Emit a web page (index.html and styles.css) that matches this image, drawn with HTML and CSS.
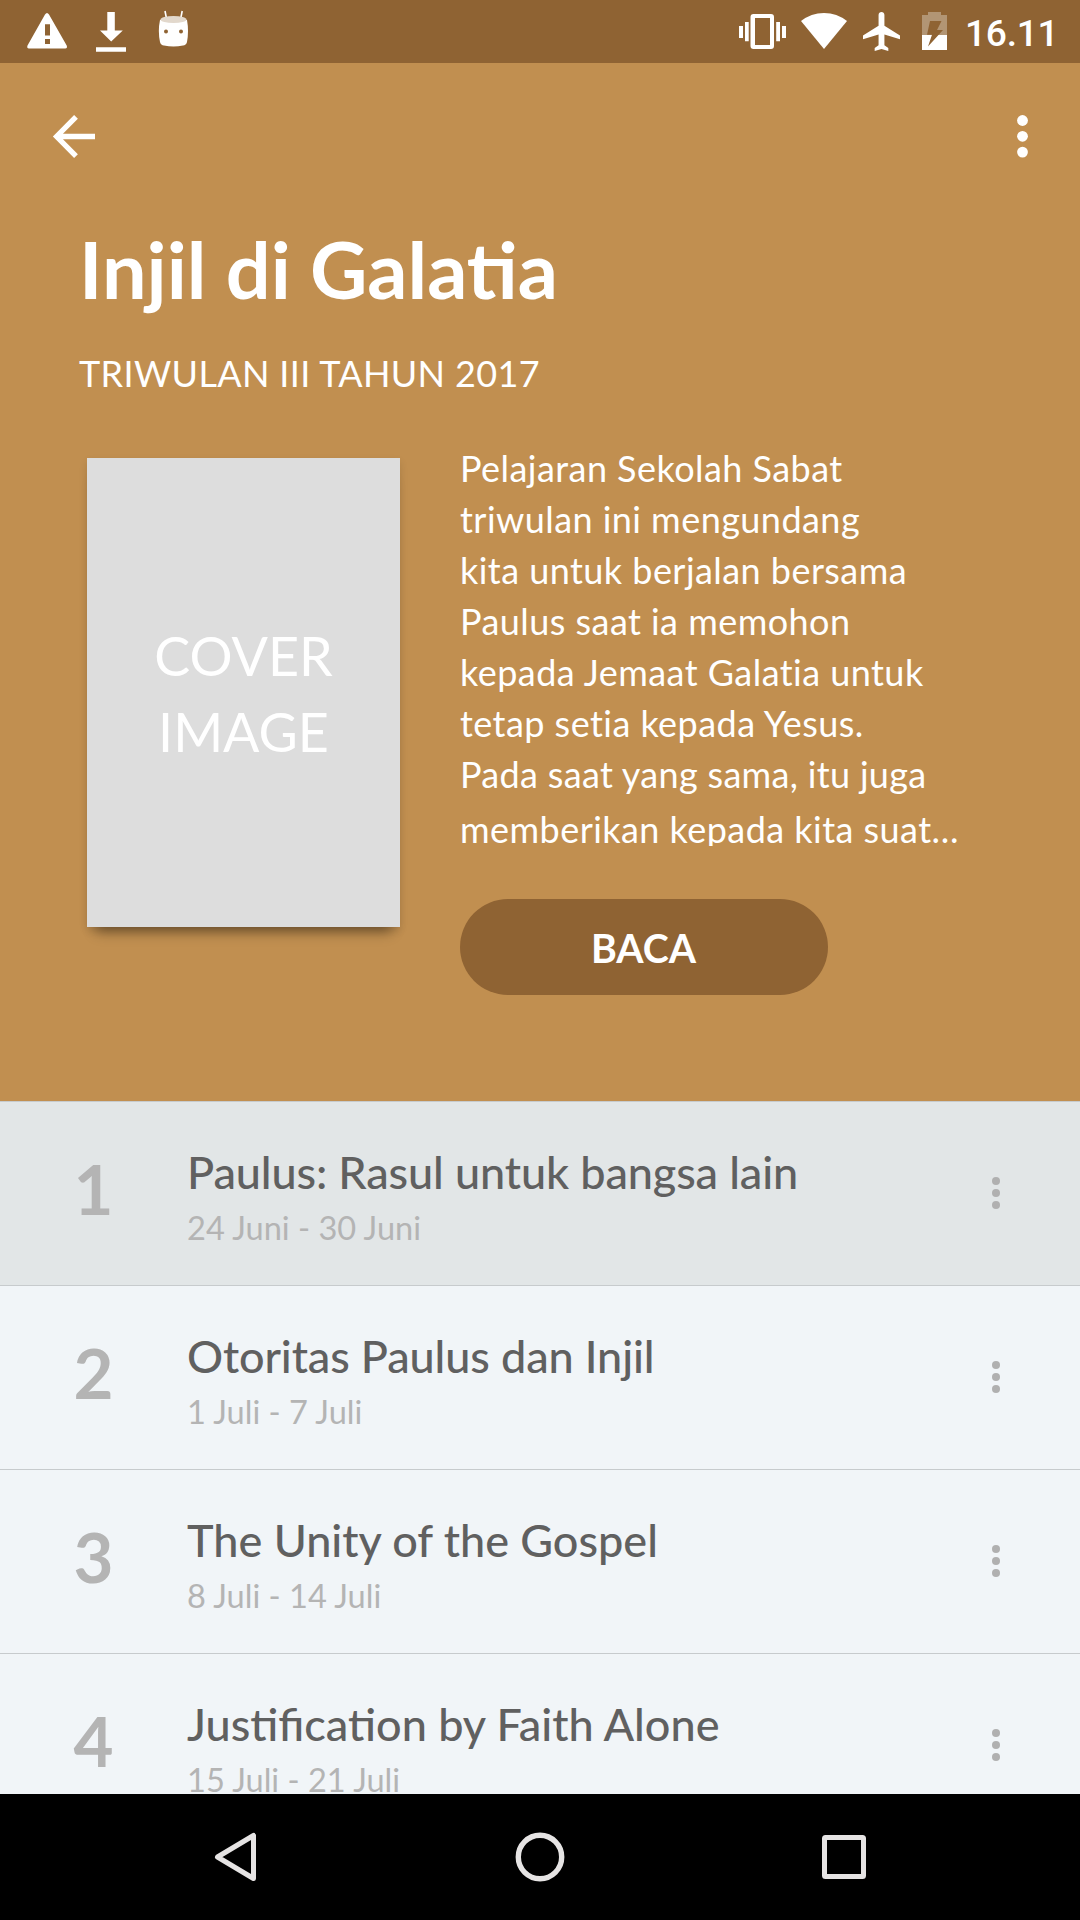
FILE: index.html
```html
<!DOCTYPE html>
<html lang="id">
<head>
<meta charset="utf-8">
<title>Injil di Galatia</title>
<link rel="stylesheet" href="styles.css">
</head>
<body>
<div class="screen">
  <div class="status-bar">
    <svg class="warning" width="42" height="63" viewBox="26 0 42 63"><path fill="#fff" fill-rule="evenodd" d="M45 14.500q2-3 4 0L66.700 45.500q1 3-1.500 3H29q-2.500 0-1.500-3zM45 24.300v11.200h5V24.300zM45 39v5h5v-5z"/></svg>
    <svg class="download" width="30" height="63" viewBox="96 0 30 63"><path fill="#fff" d="M107.300 12h7.500v18.400h8L111.200 41.500 100 30.400h7.300zM96 47.300h30v4.500H96z"/></svg>
    <svg class="android" width="32" height="63" viewBox="158 0 32 63"><path d="M165 11l1.500 7.500M182.200 11l-1.500 7.500" stroke="#fff" stroke-width="1.600"/><path fill="#fff" d="M160 20q13-4 27 0 2 11 0 22c-.5 2.500-2 3.200-4 3.500q-9.500 2-19 0c-2-.3-3.500-1-4-3.500q-2.300-11 0-22z"/><ellipse cx="173.500" cy="19.500" rx="13" ry="3.600" fill="#e2d8cc"/><circle cx="166" cy="31.500" r="2" fill="#8f6333"/><circle cx="181" cy="31.500" r="2" fill="#8f6333"/></svg>
    <div class="status-right">
      <svg class="vibrate" width="47" height="63" viewBox="739 0 47 63"><path fill="#fff" fill-rule="evenodd" d="M739 26h4v12h-4zM745 22h3.700v19.300H745zM776.200 22h3.800v19.300h-3.800zM782 26h4v12h-4zM753.500 14h17.500q3 0 3 3v29q0 3-3 3h-17.500q-3 0-3-3V17q0-3 3-3zM755 18v27h15V18z"/></svg>
      <svg class="wifi" width="46" height="63" viewBox="801 0 46 63"><path fill="#fff" d="M801 21Q811 12.900 824 12.900T847 21L824 49z"/></svg>
      <svg class="plane" width="37" height="63" viewBox="863 0 37 63"><path fill="#fff" transform="translate(859.100 8.100) scale(1.947 1.950)" d="M21 16v-2l-8-5V3.500c0-.83-.67-1.500-1.500-1.500S10 2.670 10 3.500V9l-8 5v2l8-2.500V19l-2 1.500V22l3.500-1 3.500 1v-1.500L13 19v-5.500l8 2.500z"/></svg>
      <svg class="battery" width="25" height="63" viewBox="922 0 25 63"><path fill="#b29574" d="M922 15h6v-3h13v3h6v20h-25z"/><path fill="#fff" d="M922 35h25v15h-25z"/><path fill="#8f6333" d="M930 21h11.500l-4.500 9h6L928 46.500 932 34.700h-5z"/></svg>
      <span class="clock">16.11</span>
    </div>
  </div>

  <header class="hero">
    <div class="toolbar">
      <svg width="43" height="43" viewBox="0 0 43 43"><path d="M43 21.500H5M24 1.900 4.600 21.500 24 41.100" fill="none" stroke="#fff" stroke-width="5.300"/></svg>
      <svg width="12" height="43" viewBox="0 0 12 43" fill="#fff"><circle cx="5.500" cy="5.500" r="5.400"/><circle cx="5.500" cy="21.300" r="5.400"/><circle cx="5.500" cy="37.100" r="5.400"/></svg>
    </div>
    <h1>Injil di Galatia</h1>
    <p class="quarter">TRIWULAN III TAHUN 2017</p>
    <div class="intro">
      <div class="cover">COVER<br>IMAGE</div>
      <div class="about">
        <p class="description">Pelajaran Sekolah Sabat<br>triwulan ini mengundang<br>kita untuk berjalan bersama<br>Paulus saat ia memohon<br>kepada Jemaat Galatia untuk<br>tetap setia kepada Yesus.<br><span class="snug">Pada saat yang sama, itu juga</span><span class="last-line">memberikan kepada kita suat…</span></p>
        <button class="read" type="button">BACA</button>
      </div>
    </div>
  </header>

  <main class="lessons">
    <article class="lesson current">
      <div class="number">1</div>
      <div class="info"><h2 class="tight">Paulus: Rasul untuk bangsa lain</h2><p>24 Juni - 30 Juni</p></div>
      <svg class="more" width="8" height="32" viewBox="0 0 8 32"><circle cx="4" cy="4" r="4"/><circle cx="4" cy="16" r="4"/><circle cx="4" cy="28" r="4"/></svg>
    </article>
    <article class="lesson">
      <div class="number">2</div>
      <div class="info"><h2 class="tight">Otoritas Paulus dan Injil</h2><p>1 Juli - 7 Juli</p></div>
      <svg class="more" width="8" height="32" viewBox="0 0 8 32"><circle cx="4" cy="4" r="4"/><circle cx="4" cy="16" r="4"/><circle cx="4" cy="28" r="4"/></svg>
    </article>
    <article class="lesson">
      <div class="number">3</div>
      <div class="info"><h2>The Unity of the Gospel</h2><p>8 Juli - 14 Juli</p></div>
      <svg class="more" width="8" height="32" viewBox="0 0 8 32"><circle cx="4" cy="4" r="4"/><circle cx="4" cy="16" r="4"/><circle cx="4" cy="28" r="4"/></svg>
    </article>
    <article class="lesson">
      <div class="number">4</div>
      <div class="info"><h2>Justification by Faith Alone</h2><p>15 Juli - 21 Juli</p></div>
      <svg class="more" width="8" height="32" viewBox="0 0 8 32"><circle cx="4" cy="4" r="4"/><circle cx="4" cy="16" r="4"/><circle cx="4" cy="28" r="4"/></svg>
    </article>
  </main>

  <nav class="nav-bar">
    <svg width="44" height="50" viewBox="0 0 44 50"><path d="M39.500 3.500v43L3.500 25z" fill="none" stroke="#e6e4e4" stroke-width="5" stroke-linejoin="round"/></svg>
    <svg width="50" height="50" viewBox="0 0 50 50"><circle cx="25" cy="25" r="21.700" fill="none" stroke="#e6e4e4" stroke-width="5.400"/></svg>
    <svg width="44" height="50" viewBox="0 0 44 50"><rect x="2.500" y="5.500" width="39" height="39" rx="1" fill="none" stroke="#e6e4e4" stroke-width="5"/></svg>
  </nav>
</div>
</body>
</html>
```
FILE: styles.css
```css
* { box-sizing: border-box; }
body, h1, h2, p { margin: 0; }
svg { display: block; flex: none; }

body {
  font-family: Lato, "Liberation Sans", sans-serif;
  color: #fff;
}

.screen {
  display: flex;
  flex-direction: column;
  width: 1080px;
  height: 1920px;
  overflow: hidden;
}

.status-bar {
  display: flex;
  flex: none;
  height: 63px;
  padding: 0 25px 0 26px;
  background: #8f6333;
}
.download { margin-left: 28px; }
.android { margin-left: 32px; }
.status-right { display: flex; margin-left: auto; }
.wifi { margin-left: 15px; }
.plane { margin-left: 16px; }
.battery { margin-left: 22px; }
.clock {
  width: 90px;
  margin-left: 18px;
  font: 500 37.2px/66px Roboto, sans-serif;
  letter-spacing: -0.3px;
  white-space: nowrap;
}

.hero {
  flex: none;
  height: 1038px;
  padding: 0 0 0 79px;
  background: #c18f50;
}
.toolbar {
  display: flex;
  align-items: center;
  justify-content: space-between;
  height: 147px;
  margin-left: -27px;
  padding-right: 51px;
}
h1 {
  margin-top: 11px;
  font-size: 79.2px;
  font-weight: 700;
  line-height: 95px;
}
.quarter {
  margin-top: 35px;
  font-size: 36px;
  line-height: 44px;
  letter-spacing: 0.35px;
}
.intro {
  display: flex;
  align-items: flex-start;
  gap: 60px;
  margin-top: 48px;
  padding-left: 8px;
}
.cover {
  width: 313px;
  height: 469px;
  margin-top: 15px;
  padding-top: 159px;
  background: #ddd;
  box-shadow: 0 14px 12px -9px rgba(0, 0, 0, 0.38), 0 4px 8px rgba(0, 0, 0, 0.12);
  font-size: 53.8px;
  line-height: 76px;
  text-align: center;
}
.description {
  font-size: 36px;
  line-height: 51px;
  letter-spacing: 0.45px;
  white-space: nowrap;
}
.snug { letter-spacing: 0.32px; }
.last-line {
  display: block;
  height: 46px;
  overflow: hidden;
  line-height: 59px;
}
.read {
  display: block;
  width: 368px;
  height: 96px;
  margin-top: 53px;
  padding: 1px 1px 0 0;
  border: 0;
  border-radius: 48px;
  background: #8f6333;
  color: #fff;
  font: 700 39.3px/1 Lato, sans-serif;
}

.lessons {
  flex: 1;
  min-height: 0;
  overflow: hidden;
  background: #f1f5f8;
}
.lesson {
  display: flex;
  height: 184px;
  border-top: 1px solid #c7cbcd;
}
.current { background: #e2e6e7; }
.number {
  width: 187px;
  padding-top: 46px;
  color: #b4b4b4;
  font-size: 69px;
  font-weight: 700;
  line-height: 82px;
  text-align: center;
}
.info { flex: 1; padding-top: 43px; }
h2 {
  color: #606060;
  font-size: 45px;
  font-weight: 500;
  line-height: 54px;
}
.tight { letter-spacing: -0.12px; }
.info p {
  margin-top: 9px;
  color: #b4b4b4;
  font-size: 32.6px;
  line-height: 40px;
}
.more {
  margin: 75px 80px 0 0;
  fill: #b0b0b0;
}

.nav-bar {
  display: flex;
  flex: none;
  align-items: center;
  justify-content: space-between;
  height: 126px;
  padding: 0 214px;
  background: #000;
}
```
